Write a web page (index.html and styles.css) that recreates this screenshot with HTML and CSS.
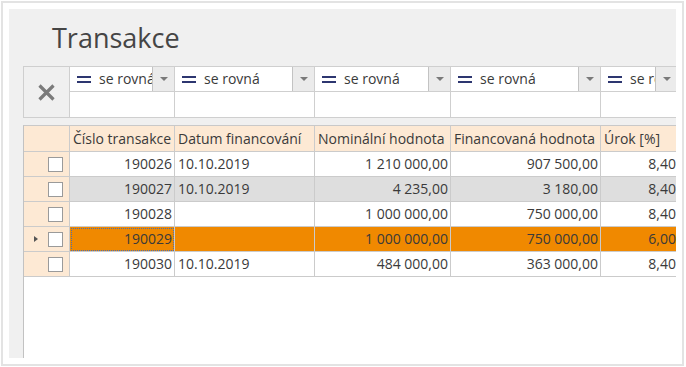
FILE: index.html
```html
<!DOCTYPE html>
<html lang="cs">

<head>
    <meta charset="UTF-8">
    <title>Transakce</title>
    <link rel="stylesheet" href="styles.css">
</head>

<body>
    <div class="frame">
        <div class="panel">
            <h1 class="title">Transakce</h1>

            <!-- filtry -->
            <div class="filters">
                <div class="clear">
                    <svg width="17" height="17" viewBox="0 0 17 17">
                        <path d="M1.5 1.5 L15.5 15.5 M15.5 1.5 L1.5 15.5" stroke="#7b7b7b" stroke-width="3.2" fill="none" />
                    </svg>
                </div>
                <div class="fcell w1">
                    <div class="op"><span class="eq"></span><span class="optext">se rovná</span><span class="drop"></span></div>
                    <div class="val"></div>
                </div>
                <div class="fcell w2">
                    <div class="op"><span class="eq"></span><span class="optext">se rovná</span><span class="drop"></span></div>
                    <div class="val"></div>
                </div>
                <div class="fcell w3">
                    <div class="op"><span class="eq"></span><span class="optext">se rovná</span><span class="drop"></span></div>
                    <div class="val"></div>
                </div>
                <div class="fcell w4">
                    <div class="op"><span class="eq"></span><span class="optext">se rovná</span><span class="drop"></span></div>
                    <div class="val"></div>
                </div>
                <div class="fcell w5">
                    <div class="op"><span class="eq"></span><span class="optext">se rovná</span><span class="drop"></span></div>
                    <div class="val"></div>
                </div>
            </div>

            <!-- tabulka -->
            <div class="grid">
                <div class="row head">
                    <div class="cell sel"></div>
                    <div class="cell">Číslo transakce</div>
                    <div class="cell">Datum financování</div>
                    <div class="cell">Nominální hodnota</div>
                    <div class="cell">Financovaná hodnota</div>
                    <div class="cell">Úrok [%]</div>
                </div>
                <div class="row">
                    <div class="cell sel"><span class="chk"></span></div>
                    <div class="cell num">190026</div>
                    <div class="cell">10.10.2019</div>
                    <div class="cell num">1 210 000,00</div>
                    <div class="cell num">907 500,00</div>
                    <div class="cell num">8,40</div>
                </div>
                <div class="row alt">
                    <div class="cell sel"><span class="chk"></span></div>
                    <div class="cell num">190027</div>
                    <div class="cell">10.10.2019</div>
                    <div class="cell num">4 235,00</div>
                    <div class="cell num">3 180,00</div>
                    <div class="cell num">8,40</div>
                </div>
                <div class="row">
                    <div class="cell sel"><span class="chk"></span></div>
                    <div class="cell num">190028</div>
                    <div class="cell"></div>
                    <div class="cell num">1 000 000,00</div>
                    <div class="cell num">750 000,00</div>
                    <div class="cell num">8,40</div>
                </div>
                <div class="row active">
                    <div class="cell sel"><span class="arrow"></span><span class="chk"></span></div>
                    <div class="cell num focus">190029</div>
                    <div class="cell"></div>
                    <div class="cell num">1 000 000,00</div>
                    <div class="cell num">750 000,00</div>
                    <div class="cell num">6,00</div>
                </div>
                <div class="row">
                    <div class="cell sel"><span class="chk"></span></div>
                    <div class="cell num">190030</div>
                    <div class="cell">10.10.2019</div>
                    <div class="cell num">484 000,00</div>
                    <div class="cell num">363 000,00</div>
                    <div class="cell num">8,40</div>
                </div>
            </div>
        </div>
    </div>
</body>

</html>
```

FILE: styles.css
```css
body,
html {
    margin: 0;
    background-color: #fff;
}

body {
    font-family: "Open Sans", "Noto Sans", sans-serif;
    font-size: 14px;
    color: #3a3a3a;
}

.frame {
    box-sizing: border-box;
    margin: 1px 0 0 1px;
    width: 683px;
    height: 365px;
    padding: 6px;
    border: 2px solid #e3e3e3;
}

.panel {
    height: 100%;
    padding: 0 0 0 14px;
    background-color: #f0f0f0;
    overflow: hidden;
}

.title {
    margin: 0;
    padding: 11px 0 0 29px;
    height: 46px;
    font-size: 27px;
    font-weight: normal;
    line-height: 36px;
    color: #454545;
}

/* filtry */
.filters {
    display: flex;
    width: 700px;
    border-top: 1px solid #cfcfcf;
    border-left: 1px solid #cfcfcf;
}

.clear {
    box-sizing: border-box;
    width: 46px;
    height: 51px;
    display: flex;
    align-items: center;
    justify-content: center;
    border-right: 1px solid #cfcfcf;
    border-bottom: 1px solid #cfcfcf;
    padding-top: 1px;
}

.fcell {
    box-sizing: border-box;
    flex: none;
    border-right: 1px solid #cfcfcf;
}

.w1 { width: 105px; }
.w2 { width: 140px; }
.w3 { width: 136px; }
.w4 { width: 150px; }
.w5 { width: 77px; }

.op {
    display: flex;
    align-items: center;
    height: 24px;
    background-color: #fff;
    border-bottom: 1px solid #cfcfcf;
    overflow: hidden;
}

.eq {
    flex: none;
    width: 14px;
    height: 3px;
    margin: 0 8px 0 7px;
    border-top: 2.5px solid #2d3670;
    border-bottom: 2.5px solid #2d3670;
}

.optext {
    flex: 1;
    white-space: nowrap;
    overflow: hidden;
    line-height: 24px;
}

.drop {
    flex: none;
    box-sizing: border-box;
    width: 22px;
    height: 24px;
    background-color: #ebebeb;
    border-left: 1px solid #c3c3c3;
    position: relative;
}

.drop::after {
    content: "";
    position: absolute;
    left: 7px;
    top: 10px;
    border-left: 4px solid transparent;
    border-right: 4px solid transparent;
    border-top: 4px solid #7a7a7a;
}

.val {
    height: 25px;
    background-color: #fff;
    border-bottom: 1px solid #cfcfcf;
}

/* tabulka */
.grid {
    margin-top: 7px;
    width: 700px;
    height: 240px;
    background-color: #fff;
    border-top: 1px solid #c9c9c9;
    border-left: 1px solid #c2c2c2;
}

.row {
    display: grid;
    grid-template-columns: 46px 105px 140px 136px 150px 76px;
    height: 25px;
}

.row.head {
    height: 26px;
}

.cell {
    box-sizing: border-box;
    padding: 0 2px 0 3px;
    border-right: 1px solid #cbcbcb;
    border-bottom: 1px solid #cbcbcb;
    line-height: 24px;
    white-space: nowrap;
    overflow: hidden;
}

.row .cell:last-child {
    border-right: none;
    padding-right: 1px;
}

.head .cell {
    background-color: #fde9d4;
    line-height: 25px;
}

.cell.num {
    text-align: right;
}

.cell.sel {
    background-color: #fde9d4;
    position: relative;
}

.alt .cell {
    background-color: #dedede;
}

.active .cell {
    background-color: #f08900;
}

.row .cell.sel {
    background-color: #fde9d4;
}

.cell.focus {
    outline: 1px dotted #4b6fb0;
    outline-offset: -2px;
}

.chk {
    position: absolute;
    left: 24px;
    top: 5px;
    box-sizing: border-box;
    width: 15px;
    height: 15px;
    background-color: #fff;
    border: 1px solid #9a9a9a;
}

.arrow {
    position: absolute;
    left: 10px;
    top: 9px;
    border-top: 3.5px solid transparent;
    border-bottom: 3.5px solid transparent;
    border-left: 4px solid #555;
}
```
